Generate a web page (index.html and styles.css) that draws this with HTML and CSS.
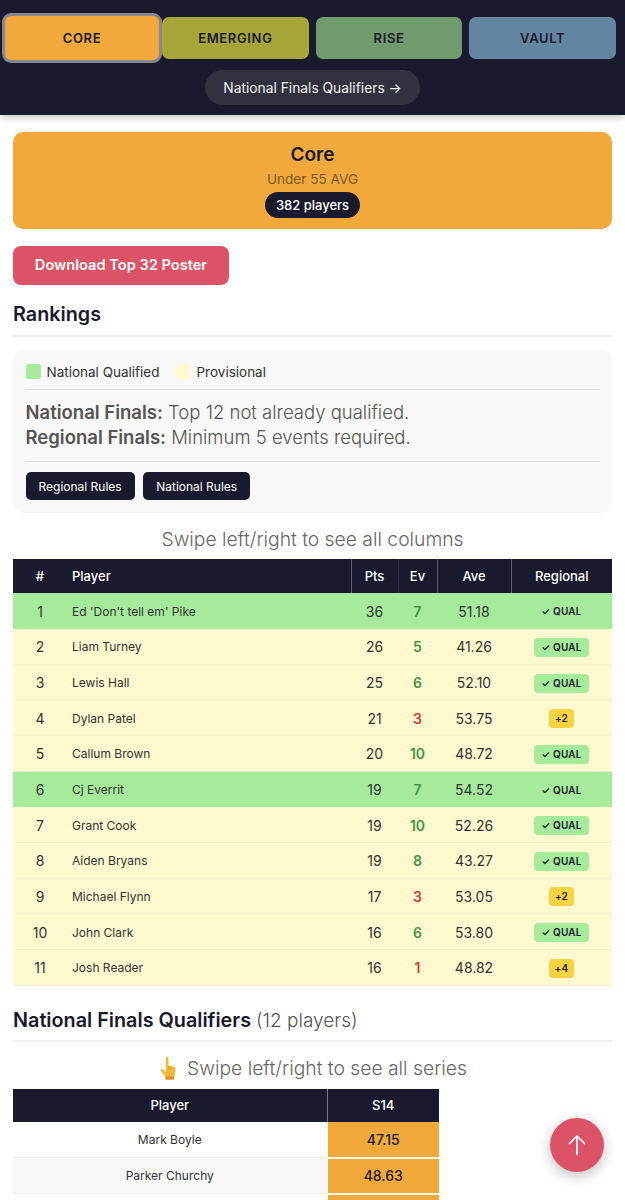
FILE: index.html
```html
<!DOCTYPE html>
<html lang="en">
<head>
    <meta charset="UTF-8">
    <meta name="viewport" content="width=device-width, initial-scale=1.0">
    <title>Rankings</title>
    <link rel="stylesheet" href="styles.css">
</head>
<body>
    <nav class="top-nav">
        <div class="tabs">
            <button class="tab tab-core active">CORE</button>
            <button class="tab tab-emerging">EMERGING</button>
            <button class="tab tab-rise">RISE</button>
            <button class="tab tab-vault">VAULT</button>
        </div>
        <a class="finals-link">National Finals Qualifiers →</a>
    </nav>

    <main class="content">
        <div class="division-card">
            <h1>Core</h1>
            <p>Under 55 AVG</p>
            <span class="count-pill">382 players</span>
        </div>

        <button class="poster-button">Download Top 32 Poster</button>

        <h2 class="section-title rankings-title">Rankings</h2>

        <div class="info-box">
            <div class="legend">
                <span class="legend-item"><i class="swatch swatch-green"></i>National Qualified</span>
                <span class="legend-item"><i class="swatch swatch-yellow"></i>Provisional</span>
            </div>
            <div class="rules">
                <div><strong>National Finals:</strong> Top 12 not already qualified.</div>
                <div><strong>Regional Finals:</strong> Minimum 5 events required.</div>
            </div>
            <div class="rule-buttons">
                <button>Regional Rules</button>
                <button>National Rules</button>
            </div>
        </div>

        <p class="swipe-hint">Swipe left/right to see all columns</p>

        <table class="rank-table">
            <thead>
                <tr>
                    <th class="col-rank">#</th>
                    <th class="col-player">Player</th>
                    <th class="col-pts">Pts</th>
                    <th class="col-ev">Ev</th>
                    <th class="col-ave">Ave</th>
                    <th class="col-reg">Regional</th>
                </tr>
            </thead>
            <tbody>
                <tr class="row-green"><td>1</td><td class="name">Ed 'Don't tell em' Pike</td><td>36</td><td class="ev-ok">7</td><td>51.18</td><td><span class="badge">✓ QUAL</span></td></tr>
                <tr class="row-yellow"><td>2</td><td class="name">Liam Turney</td><td>26</td><td class="ev-ok">5</td><td>41.26</td><td><span class="badge badge-qual">✓ QUAL</span></td></tr>
                <tr class="row-yellow"><td>3</td><td class="name">Lewis Hall</td><td>25</td><td class="ev-ok">6</td><td>52.10</td><td><span class="badge badge-qual">✓ QUAL</span></td></tr>
                <tr class="row-yellow"><td>4</td><td class="name">Dylan Patel</td><td>21</td><td class="ev-low">3</td><td>53.75</td><td><span class="badge badge-need">+2</span></td></tr>
                <tr class="row-yellow"><td>5</td><td class="name">Callum Brown</td><td>20</td><td class="ev-ok">10</td><td>48.72</td><td><span class="badge badge-qual">✓ QUAL</span></td></tr>
                <tr class="row-green"><td>6</td><td class="name">Cj Everrit</td><td>19</td><td class="ev-ok">7</td><td>54.52</td><td><span class="badge">✓ QUAL</span></td></tr>
                <tr class="row-yellow"><td>7</td><td class="name">Grant Cook</td><td>19</td><td class="ev-ok">10</td><td>52.26</td><td><span class="badge badge-qual">✓ QUAL</span></td></tr>
                <tr class="row-yellow"><td>8</td><td class="name">Aiden Bryans</td><td>19</td><td class="ev-ok">8</td><td>43.27</td><td><span class="badge badge-qual">✓ QUAL</span></td></tr>
                <tr class="row-yellow"><td>9</td><td class="name">Michael Flynn</td><td>17</td><td class="ev-low">3</td><td>53.05</td><td><span class="badge badge-need">+2</span></td></tr>
                <tr class="row-yellow"><td>10</td><td class="name">John Clark</td><td>16</td><td class="ev-ok">6</td><td>53.80</td><td><span class="badge badge-qual">✓ QUAL</span></td></tr>
                <tr class="row-yellow"><td>11</td><td class="name">Josh Reader</td><td>16</td><td class="ev-low">1</td><td>48.82</td><td><span class="badge badge-need">+4</span></td></tr>
            </tbody>
        </table>

        <h2 class="section-title finals-title">National Finals Qualifiers <span>(12 players)</span></h2>

        <p class="swipe-hint series-hint">
            <svg class="hand" viewBox="0 0 20 26" width="20" height="24">
                <path d="M7.6 2.2c0-1.6 2.9-1.6 2.9 0v8.2l5.4 1.2c1.5.4 2.2 1.5 2.2 3l-.4 4.6c-.2 1.6-.6 2.6-1.3 3.6v2.2H7.2v-2.4c-1.4-1.6-3.6-4.4-5-6.4-.9-1.3 1-2.9 2.2-1.7l3.2 3z" fill="#f5b93a"/>
                <path d="M7.2 22.4h9.2v3.2H7.2z" fill="#d98a1e"/>
                <path d="M10.6 11v4M13.4 11.6v3.6" stroke="#d98a1e" stroke-width=".7" fill="none"/>
            </svg>
            Swipe left/right to see all series
        </p>

        <table class="series-table">
            <thead>
                <tr><th class="series-player">Player</th><th class="series-val">S14</th></tr>
            </thead>
            <tbody>
                <tr><td>Mark Boyle</td><td class="score">47.15</td></tr>
                <tr class="alt"><td>Parker Churchy</td><td class="score">48.63</td></tr>
                <tr><td></td><td class="score"></td></tr>
            </tbody>
        </table>
    </main>

    <button class="to-top" aria-label="Back to top">
        <svg viewBox="0 0 24 24" width="24" height="24" fill="none" stroke="#fff" stroke-width="1.7" stroke-linecap="round" stroke-linejoin="round">
            <path d="M12 21.5V3M4.5 10.5 12 3l7.5 7.5"/>
        </svg>
    </button>
</body>
</html>
```

FILE: styles.css
```css
* {
    box-sizing: border-box;
}
html, body {
    margin: 0;
    height: 1200px;
    overflow: hidden;
}
body {
    font-family: Inter, "Noto Sans", sans-serif;
    color: #1a1a2e;
    background: #fff;
}
button {
    font-family: inherit;
    border: none;
}

/* top nav */
.top-nav {
    background: #1a1a2e;
    height: 115px;
    padding-top: 13px;
    box-shadow: 0 2px 8px rgba(0, 0, 0, 0.25);
    display: flex;
    flex-direction: column;
    align-items: center;
}
.tabs {
    display: flex;
    gap: 7px;
    padding: 0 9px 0 2px;
    width: 100%;
    height: 50px;
    align-items: center;
}
.tab {
    flex: 1;
    height: 42px;
    border-radius: 7px;
    font-size: 13px;
    font-weight: 600;
    letter-spacing: 0.65px;
    color: #1a1a2e;
}
.tab-core {
    background: #f2a93b;
}
.tab-emerging {
    background: #a6a537;
}
.tab-rise {
    background: #6f9b6d;
}
.tab-vault {
    background: #64859f;
}
.tab.active {
    flex: none;
    width: 160px;
    height: 50px;
    margin-right: -7px;
    border: 3px solid #87878f;
    border-radius: 9px;
}
.finals-link {
    margin-top: 7px;
    height: 35px;
    width: 215px;
    border-radius: 18px;
    background: #31313f;
    color: #f0f0f2;
    font-size: 13.8px;
    display: flex;
    align-items: center;
    justify-content: center;
}

/* main */
.content {
    padding: 17px 13px 0 13px;
}
.division-card {
    background: #f2a93b;
    border-radius: 10px;
    height: 97px;
    padding-top: 12px;
    text-align: center;
}
.division-card h1 {
    margin: 0;
    font-size: 19px;
    line-height: 21px;
    font-weight: 600;
    color: #1a1a2e;
}
.division-card p {
    margin: 5px 0 4px;
    font-size: 13.6px;
    line-height: 18px;
    color: #7a5a25;
}
.count-pill {
    display: inline-block;
    background: #1a1a2e;
    color: #fff;
    font-size: 13px;
    font-weight: 500;
    line-height: 26px;
    padding: 0 11px;
    border-radius: 13px;
}
.poster-button {
    display: block;
    margin-top: 17px;
    width: 216px;
    height: 39px;
    background: #dc5266;
    color: #fff;
    border-radius: 8px;
    font-size: 14.6px;
    font-weight: 600;
    padding-bottom: 2px;
}
.section-title {
    margin: 0;
    font-size: 19.8px;
    font-weight: 600;
    line-height: 26px;
    border-bottom: 2px solid #eeeeee;
    color: #1a1a2e;
}
.rankings-title {
    margin-top: 16px;
    padding-bottom: 8px;
}
.finals-title {
    margin-top: 21px;
    padding-bottom: 6px;
}
.finals-title span {
    font-size: 19px;
    font-weight: 300;
    color: #555;
}

/* legend + rules box */
.info-box {
    margin-top: 13px;
    background: #f8f8f8;
    border-radius: 10px;
    height: 163px;
    padding: 12px 12.5px 0;
}
.legend {
    display: flex;
    gap: 16px;
    height: 28px;
    padding-bottom: 8px;
    border-bottom: 1px solid #e2e2e2;
    font-size: 13.5px;
    line-height: 18px;
    color: #333;
}
.legend-item {
    display: flex;
    align-items: center;
    gap: 6px;
}
.swatch {
    width: 15px;
    height: 15px;
    border-radius: 3px;
}
.swatch-green {
    background: #a5eb9b;
}
.swatch-yellow {
    background: #fff9cf;
}
.rules {
    padding: 10px 0 11px;
    border-bottom: 1px solid #e2e2e2;
    font-size: 18.5px;
    line-height: 25px;
    font-weight: 300;
    color: #555;
}
.rules strong {
    font-weight: 600;
}
.rule-buttons {
    display: flex;
    gap: 8.5px;
    margin-top: 10px;
}
.rule-buttons button {
    background: #1a1a2e;
    color: #fff;
    font-size: 12px;
    height: 28px;
    padding: 0 13px;
    border-radius: 5px;
}

.swipe-hint {
    margin: 14px 0 8px;
    text-align: center;
    font-size: 19.3px;
    line-height: 24px;
    font-weight: 300;
    color: #666;
}

/* rankings table */
.rank-table {
    width: 599px;
    border-collapse: collapse;
    table-layout: fixed;
}
.rank-table th {
    background: #1a1a2e;
    color: #fff;
    height: 34px;
    padding: 0;
    font-size: 13px;
    font-weight: 500;
    border-right: 1px solid #5d5d6d;
}
.rank-table th:last-child {
    border-right: none;
}
.rank-table th.col-rank {
    width: 54px;
    border-right: none;
}
.rank-table th.col-player {
    width: 284px;
    text-align: left;
    padding-left: 5px;
}
.rank-table th.col-pts {
    width: 47px;
    border-right-color: #33334a;
}
.col-ev {
    width: 39px;
}
.col-ave {
    width: 74px;
}
.rank-table td {
    height: 35.65px;
    padding: 1px 0 0;
    text-align: center;
    font-size: 14px;
    color: #333;
    border-bottom: 1px solid #f3eecb;
}
.rank-table td.name {
    text-align: left;
    padding-left: 5px;
    font-size: 12px;
}
.row-green td {
    background: #a5eb9b;
    border-bottom-color: #a5eb9b;
}
.row-yellow td {
    background: #fff9cf;
}
.rank-table td.ev-ok {
    color: #479447;
    font-weight: 600;
}
.rank-table td.ev-low {
    color: #c9403f;
    font-weight: 600;
}
.badge {
    display: inline-block;
    font-size: 10px;
    font-weight: 600;
    line-height: 19px;
    padding: 0 7px;
    border-radius: 4px;
    letter-spacing: 0.2px;
    color: #1a1a2e;
}
.badge-qual {
    background: #a5eb9b;
}
.badge-need {
    background: #f7d342;
    padding: 0 6px;
}

/* series table */
.series-hint {
    margin: 14px 0 9px;
    display: flex;
    justify-content: center;
    align-items: center;
    gap: 9px;
}
.series-table {
    width: 426px;
    border-collapse: collapse;
    table-layout: fixed;
}
.series-table th {
    background: #1a1a2e;
    color: #fff;
    height: 33px;
    padding: 0;
    font-size: 13px;
    font-weight: 500;
}
.series-player {
    width: 314px;
    border-right: 1px solid #777785;
}
.series-table td {
    height: 36px;
    padding: 0;
    text-align: center;
    font-size: 12px;
    color: #333;
    border-bottom: 1px solid #eeeeee;
}
.series-table tr.alt td {
    background: #f8f8f8;
}
.series-table tr td.score {
    background: #f2a93b;
    color: #1a1a2e;
    font-size: 14px;
    font-weight: 500;
    border-bottom: 2px solid #fff;
    border-left: 1px solid #fff;
}

/* floating button */
.to-top {
    position: fixed;
    left: 550px;
    top: 1118px;
    width: 54px;
    height: 54px;
    padding: 0;
    border-radius: 50%;
    background: #dc5266;
    box-shadow: 0 4px 14px rgba(0, 0, 0, 0.25);
    display: flex;
    align-items: center;
    justify-content: center;
}
```
